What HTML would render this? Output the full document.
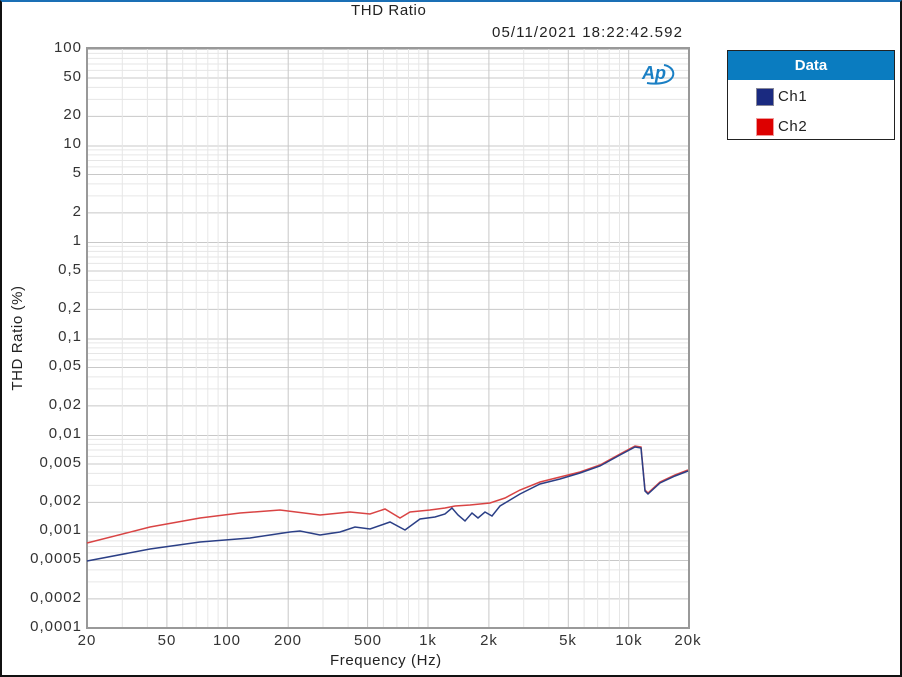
<!DOCTYPE html><html><head><style>
body{margin:0;background:#fff;width:902px;height:677px;overflow:hidden;font-family:"Liberation Sans",sans-serif}
.frame{position:absolute;left:0;top:0;width:898px;height:673px;border:2px solid #111;border-top:2px solid #1a6fb5}
.t{position:absolute;font-size:15px;color:#222;white-space:nowrap;letter-spacing:0.6px}
.yl{position:absolute;right:820px;font-size:15px;letter-spacing:1px;color:#333;text-align:right;white-space:nowrap}
.xl{position:absolute;top:632px;font-size:15px;letter-spacing:1px;color:#333;transform:translateX(-50%)}
</style></head><body>
<div class="frame"></div>
<div class="t" style="left:351px;top:2px">THD Ratio</div>
<div class="t" style="left:492px;top:24px;letter-spacing:1.1px">05/11/2021 18:22:42.592</div>
<svg width="902" height="677" style="position:absolute;left:0;top:0">
<defs>
<g id="hd" stroke="#e6e6e6" stroke-width="1">
<line x1="87" x2="689" y1="4.4" y2="4.4"/><line x1="87" x2="689" y1="9.4" y2="9.4"/><line x1="87" x2="689" y1="15" y2="15"/><line x1="87" x2="689" y1="21.4" y2="21.4"/><line x1="87" x2="689" y1="38.4" y2="38.4"/><line x1="87" x2="689" y1="50.4" y2="50.4"/>
<g stroke="#c8c8c8"><line x1="87" x2="689" y1="0.5" y2="0.5"/><line x1="87" x2="689" y1="29" y2="29"/><line x1="87" x2="689" y1="67.4" y2="67.4"/></g>
</g>
<g id="vd" stroke="#e6e6e6" stroke-width="1">
<line y1="49" y2="628" x1="35.3" x2="35.3"/><line y1="49" y2="628" x1="60.4" x2="60.4"/><line y1="49" y2="628" x1="95.7" x2="95.7"/><line y1="49" y2="628" x1="109.2" x2="109.2"/><line y1="49" y2="628" x1="120.8" x2="120.8"/><line y1="49" y2="628" x1="131.1" x2="131.1"/>
<g stroke="#c8c8c8"><line y1="49" y2="628" x1="0.5" x2="0.5"/><line y1="49" y2="628" x1="79.9" x2="79.9"/><line y1="49" y2="628" x1="140.3" x2="140.3"/></g>
</g>
</defs>
<use href="#hd" y="49"/><use href="#hd" y="145.5"/><use href="#hd" y="242"/><use href="#hd" y="338.5"/><use href="#hd" y="435"/><use href="#hd" y="531.5"/>
<use href="#vd" x="87"/><use href="#vd" x="287.7"/><use href="#vd" x="488.4"/>
<rect x="87" y="48" width="602" height="580" fill="none" stroke="#999" stroke-width="2"/>
<polyline fill="none" stroke="#d94444" stroke-width="1.5" points="87,543 150,527 200,518 240,513 280,510 320,515 350,512 370,514 385,509 400,518 410,512 430,510 445,508 455,506 470,505 490,503 505,498 520,490 540,482 560,477 580,472 600,465 620,454 635,446 641,447 645,490 648,493 660,482 675,475 688,470"/>
<polyline fill="none" stroke="#2b3f86" stroke-width="1.5" points="87,561 150,549 200,542 250,538 290,532 300,531 320,535 340,532 355,527 370,529 390,522 405,530 420,519 435,517 445,514 452,508 458,515 465,521 472,513 478,518 485,512 492,516 500,506 510,500 520,494 540,484 560,479 580,473 600,466 620,455 635,447 641,448 645,491 648,494 660,483 675,476 688,471"/>
<g transform="translate(642,62)">
<text x="0" y="17" font-family="Liberation Sans" font-weight="bold" font-style="italic" font-size="18" fill="#1a7fc4">Ap</text>
<path d="M22 3 C33 5 35 16 24 20 C18 22 10 22 5 21" fill="none" stroke="#1a7fc4" stroke-width="2"/>
</g>
</svg>
<div class="yl" style="top:39px">100</div><div class="yl" style="top:68px">50</div><div class="yl" style="top:106px">20</div><div class="yl" style="top:135px">10</div>
<div class="yl" style="top:164px">5</div><div class="yl" style="top:203px">2</div><div class="yl" style="top:232px">1</div><div class="yl" style="top:261px">0,5</div>
<div class="yl" style="top:299px">0,2</div><div class="yl" style="top:328px">0,1</div><div class="yl" style="top:357px">0,05</div><div class="yl" style="top:396px">0,02</div>
<div class="yl" style="top:425px">0,01</div><div class="yl" style="top:454px">0,005</div><div class="yl" style="top:492px">0,002</div><div class="yl" style="top:521px">0,001</div>
<div class="yl" style="top:550px">0,0005</div><div class="yl" style="top:589px">0,0002</div><div class="yl" style="top:618px">0,0001</div>
<div class="xl" style="left:87px">20</div><div class="xl" style="left:167px">50</div><div class="xl" style="left:227px">100</div><div class="xl" style="left:288px">200</div><div class="xl" style="left:368px">500</div><div class="xl" style="left:428px">1k</div><div class="xl" style="left:489px">2k</div><div class="xl" style="left:568px">5k</div><div class="xl" style="left:629px">10k</div><div class="xl" style="left:688px">20k</div>
<div class="t" style="left:330px;top:652px">Frequency (Hz)</div>
<div class="t" style="left:-42px;top:329px;width:120px;height:18px;text-align:center;transform:rotate(-90deg)">THD Ratio (%)</div>
<div style="position:absolute;left:727px;top:50px;width:166px;height:88px;border:1px solid #222">
<div style="background:#0a7cc0;color:#fff;font-weight:bold;font-size:15px;text-align:center;height:29px;line-height:29px">Data</div>
<div style="position:absolute;left:28px;top:37px;width:16px;height:16px;background:#1a2a80;border:1px solid #889"></div>
<div class="t" style="left:50px;top:37px">Ch1</div>
<div style="position:absolute;left:28px;top:67px;width:16px;height:16px;background:#d00;border:1px solid #e99"></div>
<div class="t" style="left:50px;top:67px">Ch2</div>
</div>
</body></html>
